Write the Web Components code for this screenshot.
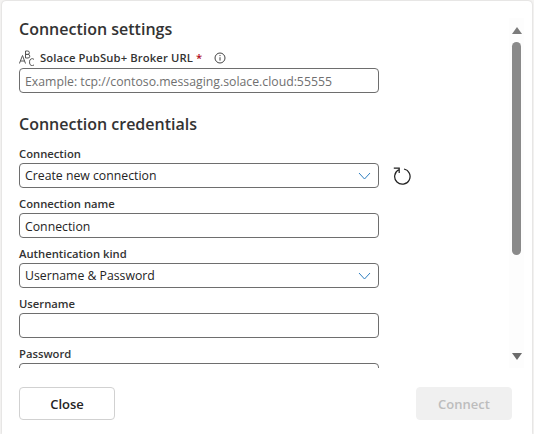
<!DOCTYPE html>
<html><head><meta charset="utf-8"><style>
html,body{margin:0;padding:0;height:100%;background:#f4f3f2;overflow:hidden}
body{font-family:"Open Sans","Noto Sans",sans-serif;color:#242424}
</style></head><body>
<conn-dialog>
  <form-section title="Connection settings">
    <form-field label="Solace PubSub+ Broker URL" required info abc>
      <text-box placeholder="Example: tcp://contoso.messaging.solace.cloud:55555"></text-box>
    </form-field>
  </form-section>
  <form-section title="Connection credentials" second>
    <form-field label="Connection"><div style="display:flex;align-items:center"><text-box value="Create new connection" select></text-box><refresh-icon></refresh-icon></div></form-field>
    <form-field label="Connection name"><text-box value="Connection"></text-box></form-field>
    <form-field label="Authentication kind"><text-box value="Username &amp; Password" select></text-box></form-field>
    <form-field label="Username"><text-box></text-box></form-field>
    <form-field label="Password"><text-box></text-box></form-field>
  </form-section>
</conn-dialog>
<script>
function def(name,html,init){customElements.define(name,class extends HTMLElement{connectedCallback(){if(this.shadowRoot)return;const r=this.attachShadow({mode:"open"});r.innerHTML=html;if(init)init(this,r);}});}
def("conn-dialog",`<style>
:host{display:flex;flex-direction:column;box-sizing:border-box;width:530px;height:433px;margin:1px 0 0 2px;background:#fff;border-radius:4px 4px 0 0;box-shadow:0 0 2px rgba(0,0,0,.2)}
.main{display:flex;height:367px;flex:none}
.scroll{flex:1;overflow:hidden;padding:17px 0 0 17px;min-width:0}
.bar{width:15px;flex:none;margin:17px 8px 0 0;display:flex;flex-direction:column;align-items:center;background:#fdfdfd;height:350px}
.bar i{display:block}
.up{margin-top:9px;border:solid transparent;border-width:0 5px 7px;border-bottom-color:#7b7b7b}
.thumb{width:9px;height:213px;margin-top:8px;background:#8a8a8a;border-radius:5px}
.down{margin-top:auto;margin-bottom:8px;border:solid transparent;border-width:7px 5px 0;border-top-color:#6b6b6b}
.foot{display:flex;justify-content:space-between;padding:19px 20px 0 17px}
button{font:600 13px "Open Sans",sans-serif;height:33px;border-radius:4px;box-sizing:border-box;padding:0}
.close{width:96px;background:#fff;border:1px solid #d1d1d1;color:#242424}
.connect{width:96px;background:#f0f0f0;border:1px solid #f0f0f0;color:#bdbdbd}
</style>
<div class="main"><div class="scroll"><slot></slot></div><div class="bar"><i class="up"></i><i class="thumb"></i><i class="down"></i></div></div>
<div class="foot"><button class="close">Close</button><button class="connect">Connect</button></div>`);
def("form-section",`<style>
:host{display:block}
:host([second]){margin-top:20px}
h2{margin:0 0 9px;font:600 16px/22px "Open Sans",sans-serif;color:#333}
:host([second]) h2{margin-bottom:10px}
</style><h2></h2><slot></slot>`,(h,r)=>{r.querySelector("h2").textContent=h.getAttribute("title")});
def("form-field",`<style>
:host{display:block;margin-bottom:7px}
.l{display:flex;align-items:center;height:18px;font:600 11.25px/18px "Open Sans",sans-serif;color:#333}
:host([abc]) .l{margin-bottom:1px;letter-spacing:.12px}
.r{color:#b10e1c;margin-left:3px}
svg{flex:none}
.abc{margin-right:5px}
.info{margin-left:12px}
</style><div class="l"></div><slot></slot>`,(h,r)=>{const l=r.querySelector(".l");let s="";
if(h.hasAttribute("abc"))s+=`<svg class="abc" width="16" height="16" viewBox="0 0 16 16" fill="none" stroke="#555" stroke-width="1"><path d="M.4 13.5 3.5 5.5l3 8M1.3 11h4.3M6.5 1v7M6.5 1h2.2a1.7 1.7 0 0 1 0 3.4H6.5h2.5a1.8 1.8 0 0 1 0 3.6H6.5M15 9.4a2.6 2.6 0 0 0-4.4 1.8v1.8a2.6 2.6 0 0 0 4.4 1.9"/></svg>`;
s+=`<span></span>`;
if(h.hasAttribute("required"))s+=`<span class="r">*</span>`;
if(h.hasAttribute("info"))s+=`<svg class="info" width="12" height="12" viewBox="0 0 12 12" fill="none" stroke="#444"><circle cx="6" cy="6" r="5"/><path d="M6 5.2v3.4M6 3v1.1"/></svg>`;
l.innerHTML=s;l.querySelector("span").textContent=h.getAttribute("label")});
def("text-box",`<style>
:host{display:block;box-sizing:border-box;width:360px;height:25px;border:1px solid #6e6e6e;border-radius:4px;background:#fff}
.b{display:flex;box-sizing:border-box;align-items:center;justify-content:space-between;height:100%;padding:2px 7px 0 5px;font:12.27px "Open Sans",sans-serif;color:#242424;white-space:nowrap;overflow:hidden}
:host([select]) .b{padding-top:0}
.p{color:#707070}
</style><div class="b"><span></span></div>`,(h,r)=>{const b=r.querySelector(".b"),s=r.querySelector("span");
if(h.hasAttribute("placeholder")){s.textContent=h.getAttribute("placeholder");s.className="p"}else s.textContent=h.getAttribute("value")||"";
if(h.hasAttribute("select"))b.insertAdjacentHTML("beforeend",`<svg width="13" height="8" viewBox="0 0 13 8" fill="none" stroke="#2f7fc1" stroke-width="1"><path d="M1 1l5.5 6L12 1"/></svg>`)});
def("refresh-icon",`<style>:host{display:block;margin-left:14px;width:18px;height:18px}</style><svg width="18" height="18" viewBox="0 0 18 18" fill="none" stroke="#222" stroke-width="1.25"><path d="M5.6 2.8A7.7 7.7 0 1 0 11 2M.8 1H6.2V6"/></svg>`);
</script></body></html>
